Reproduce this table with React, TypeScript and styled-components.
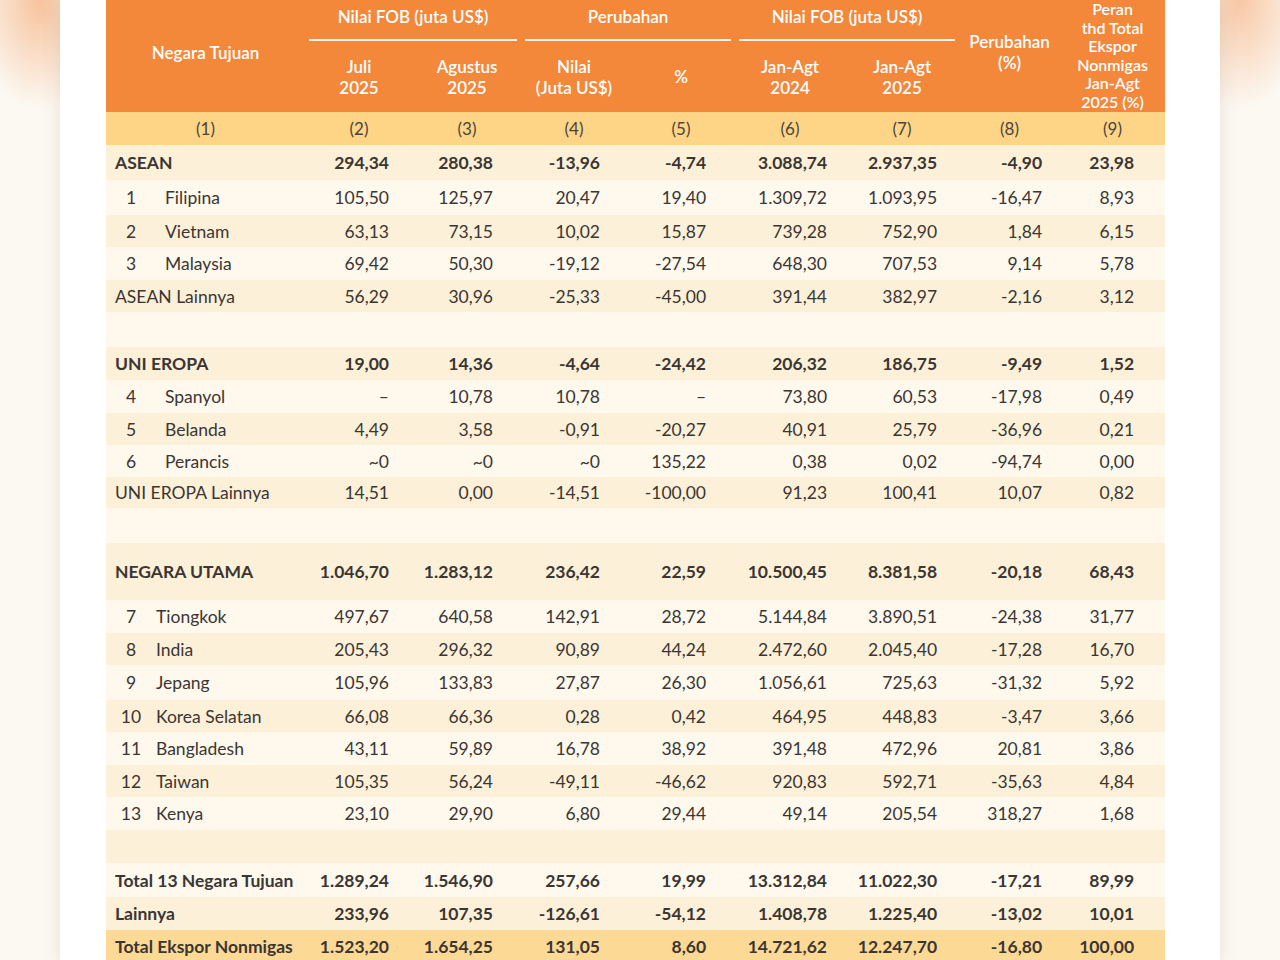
import React from "react";
import styled, { createGlobalStyle } from "styled-components";

type Tone = "dark" | "light";

interface Row {
  label?: string;
  no?: number;
  name?: string;
  bold?: boolean;
  values?: string[];
  h?: number;
  total?: boolean;
}

// column widths and right padding for the numbers
const cols = [
  { w: 199, pad: 0 },
  { w: 108, pad: 24 },
  { w: 108, pad: 28 },
  { w: 106, pad: 27 },
  { w: 108, pad: 29 },
  { w: 110, pad: 18 },
  { w: 114, pad: 22 },
  { w: 101, pad: 18 },
  { w: 105, pad: 31 },
];

const rows: Row[] = [
  { label: "ASEAN", bold: true, h: 35, values: ["294,34", "280,38", "-13,96", "-4,74", "3.088,74", "2.937,35", "-4,90", "23,98"] },
  { no: 1, name: "Filipina", h: 35, values: ["105,50", "125,97", "20,47", "19,40", "1.309,72", "1.093,95", "-16,47", "8,93"] },
  { no: 2, name: "Vietnam", h: 32, values: ["63,13", "73,15", "10,02", "15,87", "739,28", "752,90", "1,84", "6,15"] },
  { no: 3, name: "Malaysia", values: ["69,42", "50,30", "-19,12", "-27,54", "648,30", "707,53", "9,14", "5,78"] },
  { label: "ASEAN Lainnya", h: 32, values: ["56,29", "30,96", "-25,33", "-45,00", "391,44", "382,97", "-2,16", "3,12"] },
  { h: 35 },
  { label: "UNI EROPA", bold: true, values: ["19,00", "14,36", "-4,64", "-24,42", "206,32", "186,75", "-9,49", "1,52"] },
  { no: 4, name: "Spanyol", values: ["–", "10,78", "10,78", "–", "73,80", "60,53", "-17,98", "0,49"] },
  { no: 5, name: "Belanda", h: 32, values: ["4,49", "3,58", "-0,91", "-20,27", "40,91", "25,79", "-36,96", "0,21"] },
  { no: 6, name: "Perancis", h: 32, values: ["~0", "~0", "~0", "135,22", "0,38", "0,02", "-94,74", "0,00"] },
  { label: "UNI EROPA Lainnya", h: 31, values: ["14,51", "0,00", "-14,51", "-100,00", "91,23", "100,41", "10,07", "0,82"] },
  { h: 35 },
  { label: "NEGARA UTAMA", bold: true, h: 57, values: ["1.046,70", "1.283,12", "236,42", "22,59", "10.500,45", "8.381,58", "-20,18", "68,43"] },
  { no: 7, name: "Tiongkok", values: ["497,67", "640,58", "142,91", "28,72", "5.144,84", "3.890,51", "-24,38", "31,77"] },
  { no: 8, name: "India", h: 32, values: ["205,43", "296,32", "90,89", "44,24", "2.472,60", "2.045,40", "-17,28", "16,70"] },
  { no: 9, name: "Jepang", h: 35, values: ["105,96", "133,83", "27,87", "26,30", "1.056,61", "725,63", "-31,32", "5,92"] },
  { no: 10, name: "Korea Selatan", h: 32, values: ["66,08", "66,36", "0,28", "0,42", "464,95", "448,83", "-3,47", "3,66"] },
  { no: 11, name: "Bangladesh", values: ["43,11", "59,89", "16,78", "38,92", "391,48", "472,96", "20,81", "3,86"] },
  { no: 12, name: "Taiwan", h: 32, values: ["105,35", "56,24", "-49,11", "-46,62", "920,83", "592,71", "-35,63", "4,84"] },
  { no: 13, name: "Kenya", values: ["23,10", "29,90", "6,80", "29,44", "49,14", "205,54", "318,27", "1,68"] },
  { h: 33 },
  { label: "Total 13 Negara Tujuan", bold: true, h: 34, values: ["1.289,24", "1.546,90", "257,66", "19,99", "13.312,84", "11.022,30", "-17,21", "89,99"] },
  { label: "Lainnya", bold: true, values: ["233,96", "107,35", "-126,61", "-54,12", "1.408,78", "1.225,40", "-13,02", "10,01"] },
  { label: "Total Ekspor Nonmigas", bold: true, total: true, values: ["1.523,20", "1.654,25", "131,05", "8,60", "14.721,62", "12.247,70", "-16,80", "100,00"] },
];

const GlobalStyle = createGlobalStyle`
  html, body {
    margin: 0;
    padding: 0;
    height: 960px;
    overflow: hidden;
  }
  body {
    font-family: Lato, "Open Sans", sans-serif;
    background:
      radial-gradient(ellipse 70px 110px at 40px 0, rgba(242, 140, 70, 0.5), rgba(242, 140, 70, 0) 100%),
      radial-gradient(ellipse 70px 110px at 1240px 0, rgba(242, 140, 70, 0.45), rgba(242, 140, 70, 0) 100%),
      #fcf9f3;
  }
`;

const Card = styled.div`
  margin: 0 60px;
  min-height: 960px;
  background: #ffffff;
  padding: 0 55px 0 46px;
  box-shadow: 0 0 18px rgba(120, 100, 70, 0.16);
`;

const Table = styled.table`
  width: 1059px;
  border-collapse: collapse;
  table-layout: fixed;
  color: #3a3633;
  font-size: 17.5px;
`;

const HeadCell = styled.th<{ $pb?: number }>`
  background: #f3883b;
  color: #fff;
  font-weight: 600;
  font-size: 17px;
  line-height: 21px;
  padding: 0 0 ${(p) => p.$pb ?? 0}px;
  text-align: center;
  vertical-align: middle;
  white-space: nowrap;
`;

const GroupCell = styled(HeadCell)`
  vertical-align: top;
  height: 41px;
  padding: 0 4px;
`;

const GroupLabel = styled.div`
  padding: 6px 0 11px;
  line-height: 22px;
  border-bottom: 2px solid rgba(255, 255, 255, 0.9);
`;

const PeranCell = styled(HeadCell)`
  font-size: 16px;
  line-height: 18.5px;
  padding-bottom: 1px;
`;

const IndexRow = styled.tr`
  height: 33px;
  background: #fed486;
  td {
    text-align: center;
    color: #4a4540;
    font-size: 17px;
  }
`;

const BodyRow = styled.tr<{ $tone: Tone; $h: number; $total?: boolean }>`
  height: ${(p) => p.$h}px;
  background: ${(p) => (p.$total ? "#fdd996" : p.$tone === "dark" ? "#fdf0d8" : "#fef8ed")};
`;

const LabelCell = styled.td<{ $bold?: boolean }>`
  padding: 0 0 0 9px;
  white-space: nowrap;
  font-weight: ${(p) => (p.$bold ? 700 : 400)};
`;

const NumCell = styled.td<{ $pad: number; $bold?: boolean }>`
  text-align: right;
  padding: 0 ${(p) => p.$pad}px 0 0;
  white-space: nowrap;
  font-weight: ${(p) => (p.$bold ? 700 : 400)};
`;

const No = styled.span`
  display: inline-block;
  width: 30px;
  margin-left: 1px;
  text-align: center;
`;

const Name = styled.span<{ $gap: number }>`
  margin-left: ${(p) => p.$gap}px;
`;

function Header() {
  return (
    <thead>
      <tr>
        <HeadCell rowSpan={2} $pb={8}>Negara Tujuan</HeadCell>
        <GroupCell colSpan={2}><GroupLabel>Nilai FOB (juta US$)</GroupLabel></GroupCell>
        <GroupCell colSpan={2}><GroupLabel>Perubahan</GroupLabel></GroupCell>
        <GroupCell colSpan={2}><GroupLabel>Nilai FOB (juta US$)</GroupLabel></GroupCell>
        <HeadCell rowSpan={2} $pb={8}>Perubahan<br />(%)</HeadCell>
        <PeranCell rowSpan={2}>
          Peran<br />thd Total<br />Ekspor<br />Nonmigas<br />Jan-Agt<br />2025 (%)
        </PeranCell>
      </tr>
      <tr style={{ height: 71 }}>
        <HeadCell>Juli<br />2025</HeadCell>
        <HeadCell>Agustus<br />2025</HeadCell>
        <HeadCell>Nilai<br />(Juta US$)</HeadCell>
        <HeadCell>%</HeadCell>
        <HeadCell>Jan-Agt<br />2024</HeadCell>
        <HeadCell>Jan-Agt<br />2025</HeadCell>
      </tr>
      <IndexRow>
        {cols.map((_, i) => (
          <td key={i}>({i + 1})</td>
        ))}
      </IndexRow>
    </thead>
  );
}

export default function App() {
  return (
    <>
      <GlobalStyle />
      <Card>
        <Table>
          <colgroup>
            {cols.map((c, i) => (
              <col key={i} style={{ width: c.w }} />
            ))}
          </colgroup>
          <Header />
          <tbody>
            {rows.map((r, i) => (
              <BodyRow key={i} $tone={i % 2 === 0 ? "dark" : "light"} $h={r.h ?? 33} $total={r.total}>
                <LabelCell $bold={r.bold}>
                  {r.no ? (
                    <>
                      <No>{r.no}</No>
                      <Name $gap={r.no >= 7 ? 10 : 19}>{r.name}</Name>
                    </>
                  ) : (
                    r.label
                  )}
                </LabelCell>
                {cols.slice(1).map((c, j) => (
                  <NumCell key={j} $pad={c.pad} $bold={r.bold}>
                    {r.values ? r.values[j] : ""}
                  </NumCell>
                ))}
              </BodyRow>
            ))}
          </tbody>
        </Table>
      </Card>
    </>
  );
}
